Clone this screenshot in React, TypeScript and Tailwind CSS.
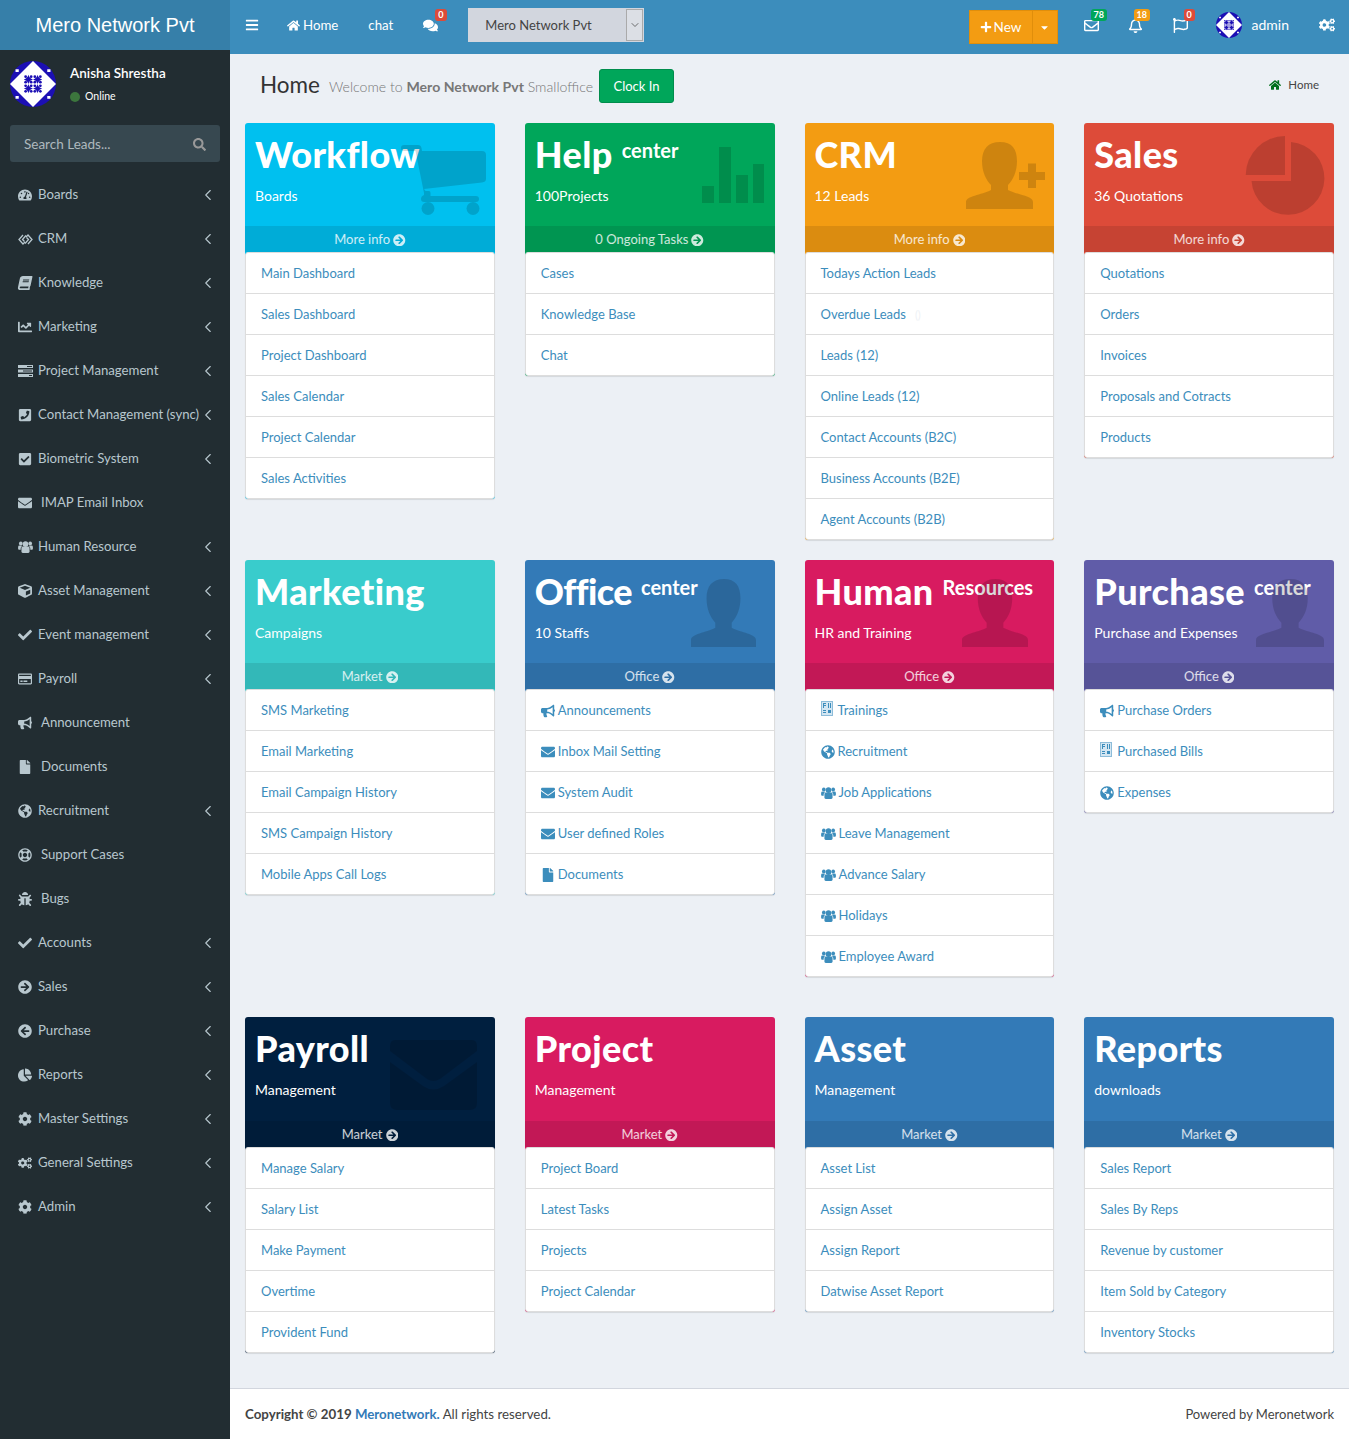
import type { ReactNode } from "react";
import { ChevronDown, ChevronLeft } from "lucide-react";
import {
  FaArrowCircleLeft, FaArrowCircleRight, FaBars, FaBook, FaBug, FaBullhorn, FaCaretDown, FaChartLine,
  FaChartPie, FaCheck, FaCheckSquare, FaCog, FaCogs, FaComments, FaCube, FaEnvelope, FaFile, FaGlobeAmericas, FaHome,
  FaPhoneSquare, FaPlus, FaRegBell, FaRegCreditCard, FaRegEnvelope, FaRegFlag, FaRegLifeRing, FaSearch,
  FaTachometerAlt,
} from "react-icons/fa";

// Round logo used for both avatars
function Logo({ size }: { size: number }) {
  const stars = [[40, 40], [60, 40], [40, 60], [60, 60]];
  return (
    <svg width={size} height={size} viewBox="0 0 100 100" className="shrink-0">
      <circle cx="50" cy="50" r="50" fill="#1c0fb4" />
      <path d="M50 0 L100 50 L50 100 L0 50Z" fill="#fff" />
      <path d="M12 18l7 0 0 6-7 0zM81 18l7 0 0 6-7 0zM12 76l7 0 0 6-7 0zM81 76l7 0 0 6-7 0z" fill="#fff" />
      {stars.map(([x, y]) => (
        <g key={`${x}-${y}`} fill="#1c0fb4">
          <path d={`M${x} ${y - 10} Q${x + 2} ${y - 2} ${x + 10} ${y} Q${x + 2} ${y + 2} ${x} ${y + 10} Q${x - 2} ${y + 2} ${x - 10} ${y} Q${x - 2} ${y - 2} ${x} ${y - 10}Z`} />
          <circle cx={x - 6} cy={y - 6} r="3" />
          <circle cx={x + 6} cy={y - 6} r="3" />
          <circle cx={x - 6} cy={y + 6} r="3" />
          <circle cx={x + 6} cy={y + 6} r="3" />
        </g>
      ))}
    </svg>
  );
}

function TasksIcon() {
  return (
    <svg width="15" height="12" viewBox="0 0 15 12" fill="currentColor">
      <path d="M0 0h15v3H0zM0 4.500h15v3H0zM0 9h15v3H0z" />
      <path d="M9 1h5v1H9zM5 5.500h9v1H5zM11 10h3v1h-3z" fill="#222d32" />
    </svg>
  );
}

function HandshakeIcon() {
  return (
    <svg width="15" height="11" viewBox="0 0 15 11" fill="none" stroke="currentColor" strokeWidth="1.300">
      <path d="M5 1L1 5.500L5 10L7 8" />
      <path d="M10 10L14 5.500L10 1L8 3" />
      <path d="M8 1.500L4.500 5.500L6.500 7.500M7 9.500L10.500 5.500L8.500 3.500" />
    </svg>
  );
}

function UsersIcon() {
  return (
    <svg width="15" height="12" viewBox="0 0 16 13" fill="currentColor">
      <circle cx="8" cy="3.400" r="3" />
      <circle cx="2.900" cy="2.600" r="2" />
      <circle cx="13.100" cy="2.600" r="2" />
      <path d="M3.600 7.500Q3.600 6 5 6H11Q12.400 6 12.400 7.500V11Q12.400 13 10.500 13H5.500Q3.600 13 3.600 11Z" />
      <path d="M0 6.500Q0 5 1.500 5H3.800Q4.100 5.400 4.200 5.800Q2.800 6.400 2.800 8V9.500H1Q0 9.500 0 8.500Z" />
      <path d="M16 6.500Q16 5 14.500 5H12.200Q11.900 5.400 11.800 5.800Q13.200 6.400 13.200 8V9.500H15Q16 9.500 16 8.500Z" />
    </svg>
  );
}

// The square "missing glyph" box that sits in front of Trainings and Purchased Bills
function GlyphBox() {
  return (
    <svg width="12" height="15" viewBox="0 0 12 15" className="mr-[2px] -mt-[5px]">
      <rect x="0.500" y="0.500" width="11" height="14" fill="#d4e6f2" stroke="#8dbcd9" />
      <path d="M2 2h3v1H3v1h2v1H3v2H2zM7 2h1v5H7zM9 2h1v5H9zM2 9h3v1H2zM2 11h3v1H2zM7 9h3v3H7z" fill="#3c8dbc" />
    </svg>
  );
}

const personPath = "M34 0C22 0 16 7 16 19C16 30 20 38 25 43L25 48C15 53 0 54 0 60L0 67L67 67L67 60C67 54 52 53 42 48L42 43C47 38 51 30 51 19C51 7 46 0 34 0Z";

function Person({ pos }: { pos: string }) {
  return (
    <svg viewBox="0 0 67 67" className={`absolute ${pos}`} preserveAspectRatio="none" fill="rgba(0,0,0,0.15)">
      <path d={personPath} />
    </svg>
  );
}

const watermarks: Record<string, ReactNode> = {
  cart: (
    <svg viewBox="0 0 85 70" className="absolute left-[156px] top-[22px] w-[85px] h-[70px]" fill="rgba(0,0,0,0.15)">
      <path d="M3 0H17Q20 0 20.500 3L21 6H81Q85 6 85 10V34Q85 37 81 37.500L23 44L24.500 46H28Q29.500 46 29.500 48V51H75Q78 51 78 54Q78 57 75 57H23Q20 57 20 54Q20 51 23 50L23 48L14.500 6H3Q0 6 0 3Q0 0 3 0Z" />
      <circle cx="27" cy="63.500" r="6.500" />
      <circle cx="72" cy="63.500" r="6.500" />
    </svg>
  ),
  bars: (
    <svg viewBox="0 0 62 56" className="absolute left-[177px] top-[24px] w-[62px] h-[56px]" fill="rgba(0,0,0,0.15)">
      <path d="M0 39H12V56H0zM17 0H29V56H17zM34 28H46V56H34zM51 17H62V56H51z" />
    </svg>
  ),
  personAdd: (
    <svg viewBox="0 0 79 67" className="absolute left-[161px] top-[19px] w-[79px] h-[67px]" fill="rgba(0,0,0,0.15)">
      <path d={personPath} />
      <path d="M62 21.500H70V30H79V38H70V46H62V38H53V30H62Z" />
    </svg>
  ),
  pie: (
    <svg viewBox="0 0 80 80" className="absolute left-[161px] top-[13px] w-[80px] h-[80px]" fill="rgba(0,0,0,0.15)">
      <path d="M46 6A36.500 36.500 0 1 1 6.500 45L46 45Z" />
      <path d="M40 0L40 39L.7 39A39.300 39.300 0 0 1 40 0Z" />
    </svg>
  ),
  personOffice: <Person pos="left-[166px] top-[19px] w-[65px] h-[68px]" />,
  personHr: <Person pos="left-[157px] top-[19px] w-[66px] h-[68px]" />,
  personBuy: <Person pos="left-[172px] top-[19px] w-[68px] h-[68px]" />,
  mail: (
    <svg viewBox="0 0 87 70" className="absolute left-[145px] top-[23px] w-[87px] h-[70px]" fill="rgba(0,0,0,0.15)">
      <path d="M5 0H82Q87 0 87 6V11L50 39Q43 43 37 39L0 11V6Q0 0 5 0Z" />
      <path d="M0 22L33 46Q43 53 54 46L87 22V63Q87 70 80 70H7Q0 70 0 63Z" />
    </svg>
  ),
};

type NavItem = { label: string; icon: ReactNode; more?: boolean; wide?: boolean };

const nav: NavItem[] = [
  { label: "Boards", icon: <FaTachometerAlt />, more: true },
  { label: "CRM", icon: <HandshakeIcon />, more: true },
  { label: "Knowledge", icon: <FaBook className="-skew-x-[12deg]" />, more: true },
  { label: "Marketing", icon: <FaChartLine />, more: true },
  { label: "Project Management", icon: <TasksIcon />, more: true },
  { label: "Contact Management (sync)", icon: <FaPhoneSquare />, more: true },
  { label: "Biometric System", icon: <FaCheckSquare />, more: true },
  { label: "IMAP Email Inbox", icon: <FaEnvelope />, wide: true },
  { label: "Human Resource", icon: <UsersIcon />, more: true },
  { label: "Asset Management", icon: <FaCube />, more: true },
  { label: "Event management", icon: <FaCheck />, more: true },
  { label: "Payroll", icon: <FaRegCreditCard />, more: true },
  { label: "Announcement", icon: <FaBullhorn />, wide: true },
  { label: "Documents", icon: <FaFile />, wide: true },
  { label: "Recruitment", icon: <FaGlobeAmericas />, more: true },
  { label: "Support Cases", icon: <FaRegLifeRing />, wide: true },
  { label: "Bugs", icon: <FaBug />, wide: true },
  { label: "Accounts", icon: <FaCheck />, more: true },
  { label: "Sales", icon: <FaArrowCircleRight />, more: true },
  { label: "Purchase", icon: <FaArrowCircleLeft />, more: true },
  { label: "Reports", icon: <FaChartPie />, more: true },
  { label: "Master Settings", icon: <FaCog />, more: true },
  { label: "General Settings", icon: <FaCogs />, more: true },
  { label: "Admin", icon: <FaCog />, more: true },
];

type Link = { label: string; icon?: ReactNode; note?: string };
type Card = { title: string; small?: string; sub: string; foot: string; bg: string; footBg: string; mark?: string; links: Link[]; tall?: boolean; tight?: boolean };

const t = (...labels: string[]): Link[] => labels.map((label) => ({ label }));
const ic = (icon: ReactNode, ...labels: string[]): Link[] => labels.map((label) => ({ label, icon }));

const rows: { height: string; cards: Card[] }[] = [
  { height: "h-[417px] mb-[20px]", cards: [
    { title: "Workflow", sub: "Boards", foot: "More info", bg: "bg-[#00c0ef]", footBg: "bg-[#00acd7]", mark: "cart",
      links: t("Main Dashboard", "Sales Dashboard", "Project Dashboard", "Sales Calendar", "Project Calendar", "Sales Activities") },
    { title: "Help", small: "center", sub: "100Projects", foot: "0 Ongoing Tasks", bg: "bg-[#00a65a]", footBg: "bg-[#009551]", mark: "bars",
      links: t("Cases", "Knowledge Base", "Chat") },
    { title: "CRM", sub: "12 Leads", foot: "More info", bg: "bg-[#f39c12]", footBg: "bg-[#db8c10]", mark: "personAdd",
      links: [{ label: "Todays Action Leads" }, { label: "Overdue Leads", note: "()" }, ...t("Leads (12)", "Online Leads (12)", "Contact Accounts (B2C)", "Business Accounts (B2E)", "Agent Accounts (B2B)")] },
    { title: "Sales", sub: "36 Quotations", foot: "More info", bg: "bg-[#dd4b39]", footBg: "bg-[#c64333]", mark: "pie",
      links: t("Quotations", "Orders", "Invoices", "Proposals and Cotracts", "Products") },
  ] },
  { height: "h-[417px] mb-[40px]", cards: [
    { title: "Marketing", sub: "Campaigns", foot: "Market", bg: "bg-[#39cccc]", footBg: "bg-[#33b8b8]",
      links: t("SMS Marketing", "Email Marketing", "Email Campaign History", "SMS Campaign History", "Mobile Apps Call Logs") },
    { title: "Office", small: "center", tight: true, sub: "10 Staffs", foot: "Office", bg: "bg-[#337ab7]", footBg: "bg-[#2e6ea5]", mark: "personOffice",
      links: [...ic(<FaBullhorn />, "Announcements"), ...ic(<FaEnvelope />, "Inbox Mail Setting", "System Audit", "User defined Roles"), ...ic(<FaFile />, "Documents")] },
    { title: "Human", small: "Resources", sub: "HR and Training", foot: "Office", bg: "bg-[#d81b60]", footBg: "bg-[#c21856]", mark: "personHr",
      links: [...ic(<GlyphBox />, "Trainings"), ...ic(<FaGlobeAmericas />, "Recruitment"), ...ic(<UsersIcon />, "Job Applications", "Leave Management", "Advance Salary", "Holidays", "Employee Award")] },
    { title: "Purchase", small: "center", sub: "Purchase and Expenses", foot: "Office", bg: "bg-[#605ca8]", footBg: "bg-[#565397]", mark: "personBuy",
      links: [...ic(<FaBullhorn />, "Purchase Orders"), ...ic(<GlyphBox />, "Purchased Bills"), ...ic(<FaGlobeAmericas />, "Expenses")] },
  ] },
  { height: "h-[336px] mb-[35px]", cards: [
    { title: "Payroll", sub: "Management", foot: "Market", bg: "bg-[#001f3f]", footBg: "bg-[#001c39]", mark: "mail", tall: true,
      links: t("Manage Salary", "Salary List", "Make Payment", "Overtime", "Provident Fund") },
    { title: "Project", sub: "Management", foot: "Market", bg: "bg-[#d81b60]", footBg: "bg-[#c21856]", tall: true,
      links: t("Project Board", "Latest Tasks", "Projects", "Project Calendar") },
    { title: "Asset", sub: "Management", foot: "Market", bg: "bg-[#337ab7]", footBg: "bg-[#2e6ea5]", tall: true,
      links: t("Asset List", "Assign Asset", "Assign Report", "Datwise Asset Report") },
    { title: "Reports", sub: "downloads", foot: "Market", bg: "bg-[#337ab7]", footBg: "bg-[#2e6ea5]", tall: true,
      links: t("Sales Report", "Sales By Reps", "Revenue by customer", "Item Sold by Category", "Inventory Stocks") },
  ] },
];

function Badge({ text, color, left }: { text: string; color: string; left: string }) {
  return (
    <span className={`absolute -top-[9px] min-w-[10px] h-[12px] px-[3px] rounded-[3px] text-[9px] leading-[12px] font-bold text-white text-center ${left} ${color}`}>
      {text}
    </span>
  );
}

function Sidebar() {
  return (
    <aside className="w-[230px] shrink-0 bg-[#222d32]">
      <div className="h-[50px] bg-[#367fa9] flex items-center justify-center text-white text-[20px] font-['Liberation_Sans',sans-serif]">
        Mero Network Pvt
      </div>
      <div className="h-[75px] flex items-center pl-[10px] pb-[8px]">
        <Logo size={46} />
        <div className="ml-[14px]">
          <div className="text-[13.500px] font-semibold text-white leading-[20px]">Anisha Shrestha</div>
          <div className="mt-[6px] flex items-center text-[10.500px] text-white leading-[15px]">
            <span className="w-[10px] h-[10px] rounded-full bg-[#3c763d] mr-[5px]" />
            Online
          </div>
        </div>
      </div>
      <div className="mx-[10px] h-[37px] rounded-[3px] bg-[#374850] flex items-center justify-between pl-[14px] pr-[14px] pt-[1px] text-[#aeb9be] text-[13.500px]">
        <span>Search Leads...</span>
        <FaSearch className="text-[13px] text-[#999]" />
      </div>
      <nav className="mt-[10px]">
        {nav.map((item) => (
          <div key={item.label} className="h-[44px] flex items-center pl-[18px] pr-[13px] pt-[2px] text-[#b8c7ce] text-[13.200px]">
            <span className={`flex items-center text-[14px] shrink-0 ${item.wide ? "w-[23px]" : "w-[20px]"}`}>{item.icon}</span>
            <span className="flex-1 whitespace-nowrap">{item.label}</span>
            {item.more && <ChevronLeft size={18} strokeWidth={1.500} className="shrink-0 -ml-[8px]" />}
          </div>
        ))}
      </nav>
    </aside>
  );
}

function TopBar() {
  return (
    <header className="h-[54px] bg-[#3c8dbc] flex items-center text-white text-[13.250px] pl-[15px] pr-[14px] pb-[4px]">
      <FaBars className="text-[14px]" />
      <span className="ml-[28px] flex items-center gap-[3px]"><FaHome className="text-[13px]" /><span className="pt-[2px]">Home</span></span>
      <span className="ml-[30px] pt-[2px]">chat</span>
      <span className="relative ml-[30px]">
        <FaComments className="text-[15px]" />
        <Badge text="0" color="bg-[#dd4b39]" left="left-[12px]" />
      </span>
      <div className="ml-[30px] w-[176px] h-[34px] bg-[#d2d6de] flex items-center justify-between pl-[17px] pr-px text-[#444] text-[13px]">
        <span className="pt-[2px]">Mero Network Pvt</span>
        <span className="w-[17px] h-[32px] border border-[#aaa] bg-[#dcdfe5] flex items-center justify-center">
          <ChevronDown size={12} strokeWidth={1.500} />
        </span>
      </div>
      <div className="ml-auto mt-[4px] flex h-[34px] bg-[#f39c12] border border-[#e08e0b]">
        <span className="w-[62px] flex items-center justify-center gap-[2px] text-[13.500px]"><FaPlus className="text-[12px]" />New</span>
        <span className="w-[25px] border-l border-[#e08e0b] flex items-center justify-center"><FaCaretDown className="text-[11px]" /></span>
      </div>
      <span className="relative ml-[26px]"><FaRegEnvelope className="text-[15px]" /><Badge text="78" color="bg-[#00a65a]" left="left-[7px]" /></span>
      <span className="relative ml-[29px]"><FaRegBell className="text-[15px]" /><Badge text="18" color="bg-[#f39c12]" left="left-[6px]" /></span>
      <span className="relative ml-[30px]"><FaRegFlag className="text-[15px]" /><Badge text="0" color="bg-[#dd4b39]" left="left-[11px]" /></span>
      <span className="ml-[28px]"><Logo size={26} /></span>
      <span className="ml-[10px] -mt-[2px] text-[14px]">admin</span>
      <FaCogs className="ml-[30px] text-[16px]" />
    </header>
  );
}

function BoxCard({ card }: { card: Card }) {
  return (
    <div className={`relative rounded-[3px] overflow-hidden shadow-[0_1px_1px_rgba(0,0,0,0.1)] ${card.bg}`}>
      <div className={`px-[10px] pt-[9px] text-white ${card.tall ? "h-[104px]" : "h-[103px]"}`}>
        <div className="h-[42px] flex items-start whitespace-nowrap">
          <span className={`text-[36px] leading-[44px] font-black ${card.tight ? "-tracking-[0.6px]" : "tracking-[0.4px]"}`}>{card.title}</span>
          {card.small && <span className="ml-[9px] mt-[5px] text-[20px] leading-[26px] font-bold">{card.small}</span>}
        </div>
        <div className="mt-[12px] text-[14px] leading-[20px]">{card.sub}</div>
      </div>
      {card.mark && watermarks[card.mark]}
      <div className={`h-[26px] pt-[2px] flex items-center justify-center gap-[3px] text-[13px] text-white/80 ${card.footBg}`}>
        {card.foot}
        <FaArrowCircleRight className="text-[12.500px]" />
      </div>
      <ul className="bg-white border border-[#ddd] rounded-[3px] text-[#3c8dbc] text-[13px]">
        {card.links.map((l, i) => (
          <li key={l.label} className={`flex items-center pl-[15px] pt-[2px] ${i === card.links.length - 1 ? "h-[40px]" : "h-[41px] border-b border-[#ddd]"}`}>
            {l.icon && <span className="flex items-center text-[14px] mr-[3px]">{l.icon}</span>}
            <span className="whitespace-nowrap">{l.label}</span>
            {l.note && <span className="ml-[9px] text-[#eef1f5] text-[11px]">{l.note}</span>}
          </li>
        ))}
      </ul>
    </div>
  );
}

export default function App() {
  return (
    <div className="min-h-screen flex bg-[#ecf0f5] text-[#333] font-['Lato',sans-serif]">
      <Sidebar />
      <main className="flex-1 min-w-0 flex flex-col">
        <TopBar />
        <div className="h-[69px] pt-[15px] pl-[30px] pr-[30px] flex items-start">
          <h1 className="text-[22.500px] leading-[32px] text-[#333]">Home</h1>
          <span className="ml-[9px] mt-[8px] text-[14.100px] leading-[20px] text-[#777] font-light whitespace-nowrap">
            Welcome to <b className="font-bold">Mero Network Pvt</b> Smalloffice
          </span>
          <span className="ml-[6px] h-[34px] w-[75px] pt-[2px] rounded-[3px] bg-[#00a65a] border border-[#008d4c] text-white text-[13px] flex items-center justify-center">
            Clock In
          </span>
          <span className="ml-auto h-[32px] flex items-center text-[11.500px] text-[#444]">
            <FaHome className="text-[#00701a] mr-[7px] text-[12px]" />Home
          </span>
        </div>
        <div className="px-[15px]">
          {rows.map((row) => (
            <div key={row.cards[0].title} className={`grid grid-cols-4 gap-x-[30px] items-start ${row.height}`}>
              {row.cards.map((card) => <BoxCard key={card.title} card={card} />)}
            </div>
          ))}
        </div>
        <footer className="mt-auto h-[51px] pt-[2px] bg-white border-t border-[#d2d6de] flex items-center justify-between px-[15px] text-[13.300px] text-[#444]">
          <span><b className="font-bold">Copyright © 2019 <span className="text-[#337ab7]">Meronetwork.</span></b> All rights reserved.</span>
          <span className="text-[13px]">Powered by Meronetwork</span>
        </footer>
      </main>
    </div>
  );
}
